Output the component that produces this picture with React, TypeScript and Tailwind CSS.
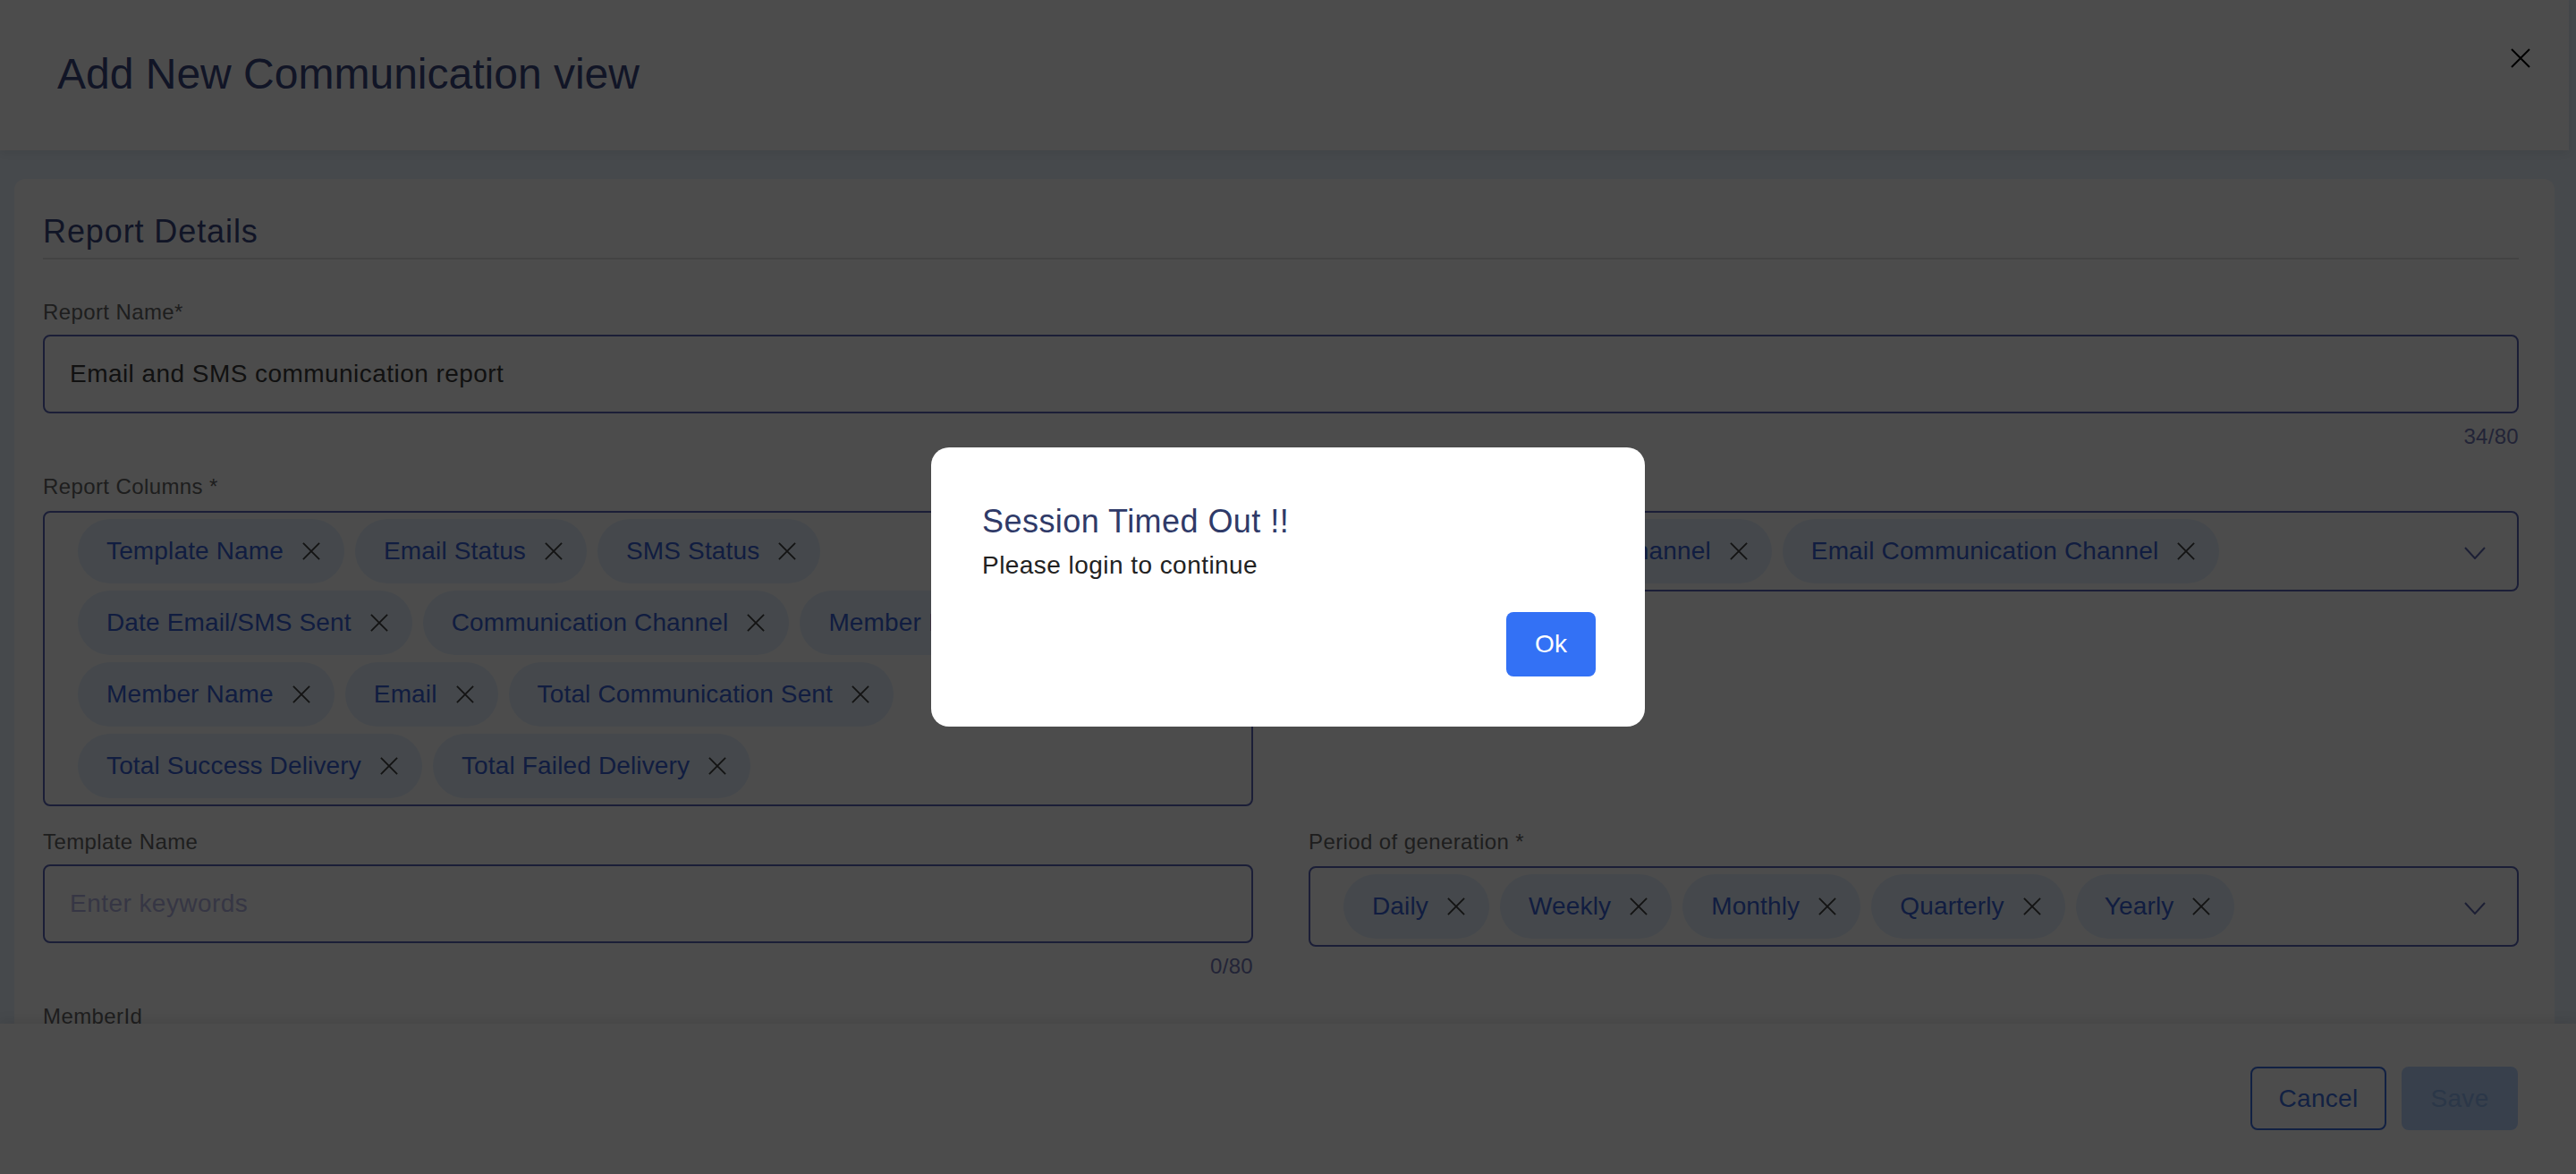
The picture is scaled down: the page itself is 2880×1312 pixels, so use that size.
import React from "react";

const font = "font-['Liberation_Sans',Arial,sans-serif]";

const reportColumns = [
    "Template Name",
    "Email Status",
    "SMS Status",
    "Date Email/SMS Sent",
    "Communication Channel",
    "Member Id",
    "Member Name",
    "Email",
    "Total Communication Sent",
    "Total Success Delivery",
    "Total Failed Delivery",
];

const channels = ["SMS Communication Channel", "Email Communication Channel"];

const periods = ["Daily", "Weekly", "Monthly", "Quarterly", "Yearly"];

const CloseIcon = ({ className }: { className?: string }) => (
    <svg viewBox="0 0 22 22" className={className} fill="none" stroke="currentColor" strokeWidth={2}>
        <path d="M1 1L21 21M21 1L1 21" />
    </svg>
);

const Chevron = () => (
    <svg viewBox="0 0 24 14" className="h-[14px] w-[24px] text-[#5f68b0]" fill="none" stroke="currentColor" strokeWidth={2}>
        <path d="M1 1L12 13L23 1" />
    </svg>
);

const Label = ({ children }: { children: React.ReactNode }) => (
    <div className="text-[24px] leading-[28px] tracking-[0.4px] text-[#666666]">{children}</div>
);

const Counter = ({ children }: { children: React.ReactNode }) => (
    <div className="mt-[12px] text-right text-[24px] leading-[28px] tracking-[0.3px] text-[#7479b8]">{children}</div>
);

const Chip = ({ label }: { label: string }) => (
    <span className="flex h-[72px] items-center gap-[20px] rounded-full bg-[#e6f2fd] pl-[32px] pr-[26px] text-[28px] tracking-[0.15px] text-[#3a62d8]">
        {label}
        <CloseIcon className="h-[20px] w-[22px] text-[#404040]" />
    </span>
);

const ChipSelect = ({ items, contentClass }: { items: string[]; contentClass: string }) => (
    <div className="mt-[13px] flex items-start rounded-[8px] border-2 border-[#5a66b8] py-[7px] pl-[37px] pr-[35px]">
        <div className={`flex flex-1 flex-wrap gap-x-[12px] gap-y-[8px] ${contentClass}`}>
            {items.map((item) => (
                <Chip key={item} label={item} />
            ))}
        </div>
        <div className="flex h-[72px] items-center pt-[4px]">
            <Chevron />
        </div>
    </div>
);

const TextInput = ({ value, placeholder }: { value?: string; placeholder?: string }) => (
    <input
        readOnly
        defaultValue={value}
        placeholder={placeholder}
        className="mt-[11px] h-[88px] w-full rounded-[8px] border-2 border-[#5a66b8] bg-white px-[28px] text-[28px] tracking-[0.45px] text-[#3a3a3a] outline-none placeholder:text-[#b4b6e4]"
    />
);

export default function App() {
    return (
        <div className={`relative flex h-screen w-full flex-col overflow-hidden bg-[#e9f3fd] ${font}`}>
            <header className="relative z-10 flex h-[168px] w-[2872px] shrink-0 justify-between bg-white pl-[64px] pr-[43px] shadow-[0_2px_10px_rgba(0,0,0,0.08)]">
                <h1 className="self-center pb-[2px] text-[48px] font-normal text-[#3a4680]">Add New Communication view</h1>
                <button className="mt-[54px] self-start text-black">
                    <CloseIcon className="h-[22px] w-[22px]" />
                </button>
            </header>

            <main className="flex-1 overflow-hidden pl-4 pr-6 pt-8">
                <div className="rounded-[12px] bg-white pb-10 pl-[32px] pr-[40px] pt-[38px]">
                    <h2 className="border-b-2 border-[#e0e0e0] pb-[8px] text-[36px] leading-[42px] tracking-[0.9px] text-[#3a4680]">
                        Report Details
                    </h2>

                    <div className="mt-[45px]">
                        <Label>Report Name*</Label>
                        <TextInput value="Email and SMS communication report" />
                        <Counter>34/80</Counter>
                    </div>

                    <div className="mt-[28px] grid grid-cols-2 items-start gap-x-[62px] gap-y-[26px]">
                        <div>
                            <Label>Report Columns *</Label>
                            <ChipSelect items={reportColumns} contentClass="pr-[110px]" />
                        </div>
                        <div>
                            <Label>Communication Channel *</Label>
                            <ChipSelect items={channels} contentClass="" />
                        </div>
                        <div>
                            <Label>Template Name</Label>
                            <TextInput placeholder="Enter keywords" />
                            <Counter>0/80</Counter>
                        </div>
                        <div>
                            <Label>Period of generation *</Label>
                            <ChipSelect items={periods} contentClass="" />
                        </div>
                    </div>

                    <div className="mt-[28px]">
                        <Label>MemberId</Label>
                        <TextInput placeholder="Enter member id" />
                    </div>
                </div>
            </main>

            <footer className="relative z-10 flex h-[168px] shrink-0 items-start justify-end gap-[17px] bg-white pr-[65px] pt-[48px] shadow-[0_-4px_12px_rgba(0,0,0,0.08)]">
                <button className="h-[71px] w-[152px] rounded-[8px] border-2 border-[#3f6fe0] text-[28px] tracking-[0.3px] text-[#3f6fe0]">
                    Cancel
                </button>
                <button className="h-[71px] w-[130px] rounded-[8px] bg-[#bbd5fd] text-[28px] tracking-[0.3px] text-[#90b8f0]">
                    Save
                </button>
            </footer>

            <div className="absolute inset-0 z-50 flex items-center justify-center bg-black/70">
                <div className="w-[798px] rounded-[20px] bg-white pb-[56px] pl-[57px] pr-[55px] pt-[62px]">
                    <div className="text-[36px] leading-[42px] tracking-[0.45px] text-[#2f3a68]">Session Timed Out !!</div>
                    <p className="mt-[12px] text-[28px] leading-[32px] tracking-[0.45px] text-[#222222]">Please login to continue</p>
                    <div className="mt-[36px] flex justify-end">
                        <button className="h-[72px] w-[100px] rounded-[8px] bg-[#3371f5] text-[28px] text-white">Ok</button>
                    </div>
                </div>
            </div>
        </div>
    );
}
